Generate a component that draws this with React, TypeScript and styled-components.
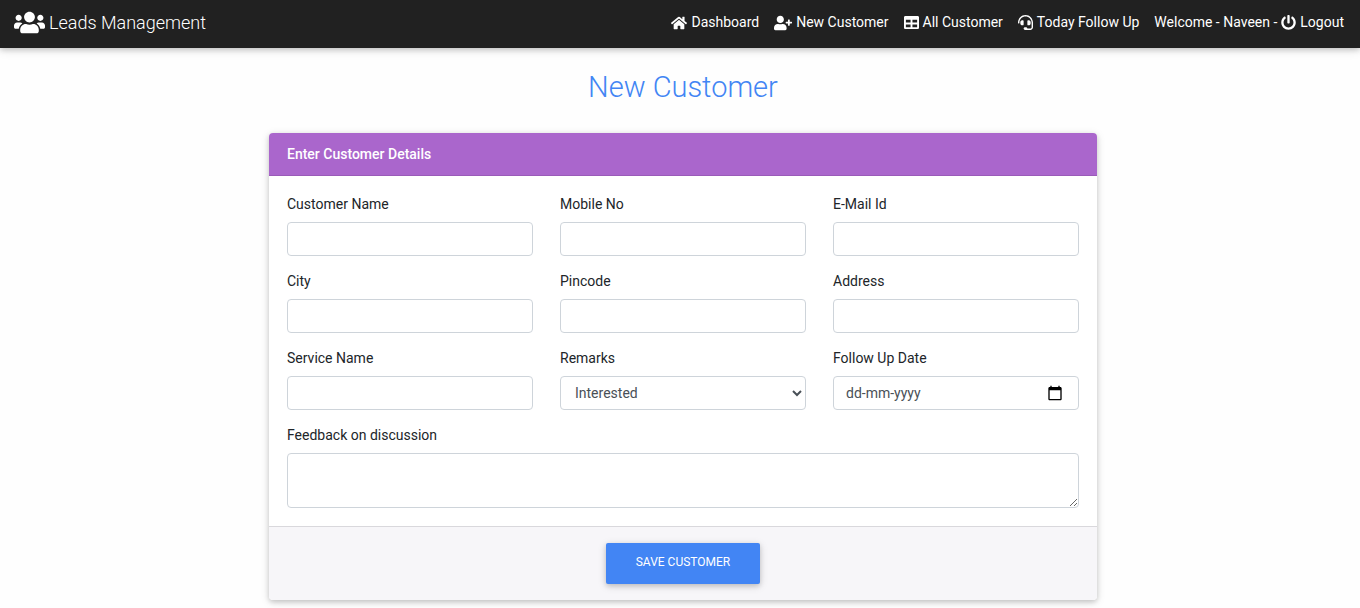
import React from "react";
import styled, { createGlobalStyle } from "styled-components";
import { FaUsers, FaHome, FaUserPlus, FaTable, FaHeadset, FaPowerOff } from "react-icons/fa";

const GlobalStyle = createGlobalStyle`
  *, *::before, *::after { box-sizing: border-box; }
  body {
    margin: 0;
    background: #fefefe;
    color: #212529;
    font-family: Roboto, "Liberation Sans", sans-serif;
    font-size: 14px;
    line-height: 21px;
  }
`;

const Navbar = styled.header`
  display: flex;
  flex-wrap: wrap;
  align-items: center;
  justify-content: space-between;
  min-height: 48px;
  padding: 0 16px 3px 14px;
  background: #212121;
  color: #fff;
  box-shadow: 0 2px 5px rgba(0, 0, 0, 0.16), 0 2px 10px rgba(0, 0, 0, 0.12);
`;

const Brand = styled.a`
  display: flex;
  align-items: center;
  gap: 4px;
  color: inherit;
  font-size: 18px;
  font-weight: 300;
  line-height: 26px;
  text-decoration: none;
`;

const Nav = styled.nav`
  display: flex;
  flex-wrap: wrap;
  gap: 15px;
`;

const NavItem = styled.div`
  display: flex;
  align-items: center;
  gap: 4px;
`;

const NavLink = styled.a`
  display: flex;
  align-items: center;
  gap: 4px;
  color: inherit;
  text-decoration: none;
`;

const Main = styled.main`
  padding: 21px 14px 8px 20px;
`;

const Title = styled.h1`
  margin: 0 0 28px;
  color: #4285f4;
  font-size: 29px;
  font-weight: 300;
  line-height: 36px;
  text-align: center;
`;

const Card = styled.form`
  max-width: 828px;
  margin: 0 auto;
  overflow: hidden;
  border-radius: 4px;
  background: #fff;
  box-shadow: 0 2px 5px rgba(0, 0, 0, 0.16), 0 2px 10px rgba(0, 0, 0, 0.12);
`;

const CardHeader = styled.h2`
  margin: 0;
  padding: 11px 18px 10px;
  border-bottom: 1px solid #9a5bb8;
  background: #aa66cc;
  color: #fff;
  font-size: 14px;
  font-weight: 500;
  line-height: 21px;
`;

const CardBody = styled.div`
  display: grid;
  grid-template-columns: repeat(auto-fit, minmax(220px, 1fr));
  gap: 15px 27px;
  padding: 18px;
`;

const Field = styled.div<{ $wide?: boolean }>`
  display: flex;
  flex-direction: column;
  gap: 7px;
  ${(p) => p.$wide && "grid-column: 1 / -1;"}
`;

const Label = styled.label`
  line-height: 21px;
`;

const control = `
  display: block;
  width: 100%;
  margin: 0;
  border: 1px solid #ced4da;
  border-radius: 4px;
  background: #fff;
  color: #495057;
  font: inherit;
`;

const Input = styled.input`
  ${control}
  height: 34px;
  padding: 5px 12px;
`;

const Select = styled.select`
  ${control}
  height: 34px;
  padding: 5px 0 5px 10px;
`;

const TextArea = styled.textarea`
  ${control}
  height: 55px;
  padding: 5px 12px;
  resize: vertical;
`;

const DateBox = styled.div`
  ${control}
  display: flex;
  align-items: center;
  height: 34px;
  padding: 0 15px 0 12px;
`;

const DateInput = styled.input`
  flex: 1;
  min-width: 0;
  padding: 0;
  border: 0;
  outline: 0;
  background: none;
  color: inherit;
  font: inherit;
  &::placeholder { color: #495057; opacity: 1; }
`;

const CalendarButton = styled.button`
  display: flex;
  padding: 0;
  border: 0;
  background: none;
  color: #000;
  cursor: pointer;
`;

const CardFooter = styled.footer`
  display: flex;
  justify-content: center;
  padding: 16px 18px;
  border-top: 1px solid #d9d8dc;
  background: #f7f6f9;
`;

const SaveButton = styled.button`
  height: 41px;
  padding: 0 30px 2px;
  border: 0;
  border-radius: 2px;
  background: #4285f4;
  color: #fff;
  font: inherit;
  font-size: 12px;
  text-transform: uppercase;
  cursor: pointer;
  box-shadow: 0 2px 5px rgba(0, 0, 0, 0.16), 0 2px 10px rgba(0, 0, 0, 0.12);
`;

function TextField({ id, label }: { id: string; label: string }) {
  return (
    <Field>
      <Label htmlFor={id}>{label}</Label>
      <Input id={id} name={id} type="text" />
    </Field>
  );
}

const textFields = [
  { id: "name", label: "Customer Name" },
  { id: "mobile", label: "Mobile No" },
  { id: "email", label: "E-Mail Id" },
  { id: "city", label: "City" },
  { id: "pincode", label: "Pincode" },
  { id: "address", label: "Address" },
  { id: "service", label: "Service Name" },
];

const links = [
  { label: "Dashboard", icon: <FaHome size={16} /> },
  { label: "New Customer", icon: <FaUserPlus size={18} /> },
  { label: "All Customer", icon: <FaTable size={15} /> },
  { label: "Today Follow Up", icon: <FaHeadset size={15} /> },
];

export default function App() {
  return (
    <>
      <GlobalStyle />
      <Navbar>
        <Brand href="#">
          <FaUsers size={31} />
          Leads Management
        </Brand>
        <Nav>
          {links.map((link) => (
            <NavLink key={link.label} href="#">
              {link.icon}
              {link.label}
            </NavLink>
          ))}
          <NavItem>
            Welcome - Naveen -
            <NavLink href="#">
              <FaPowerOff size={15} />
              Logout
            </NavLink>
          </NavItem>
        </Nav>
      </Navbar>
      <Main>
        <Title>New Customer</Title>
        <Card onSubmit={(e) => e.preventDefault()}>
          <CardHeader>Enter Customer Details</CardHeader>
          <CardBody>
            {textFields.map((f) => (
              <TextField key={f.id} {...f} />
            ))}
            <Field>
              <Label htmlFor="remarks">Remarks</Label>
              <Select id="remarks" name="remarks">
                <option>Interested</option>
                <option>Not Interested</option>
              </Select>
            </Field>
            <Field>
              <Label htmlFor="followup">Follow Up Date</Label>
              <DateBox>
                <DateInput id="followup" name="followup" type="text" placeholder="dd-mm-yyyy" />
                <CalendarButton type="button" aria-label="Choose date">
                  <svg width="16" height="16" viewBox="0 0 24 24" fill="currentColor">
                    <path d="M20 3h-1V1h-2v2H7V1H5v2H4c-1.1 0-2 .9-2 2v16c0 1.1.9 2 2 2h16c1.1 0 2-.9 2-2V5c0-1.1-.9-2-2-2zm0 18H4V8h16v13z" />
                  </svg>
                </CalendarButton>
              </DateBox>
            </Field>
            <Field $wide>
              <Label htmlFor="feedback">Feedback on discussion</Label>
              <TextArea id="feedback" name="feedback" />
            </Field>
          </CardBody>
          <CardFooter>
            <SaveButton type="submit">Save Customer</SaveButton>
          </CardFooter>
        </Card>
      </Main>
    </>
  );
}
